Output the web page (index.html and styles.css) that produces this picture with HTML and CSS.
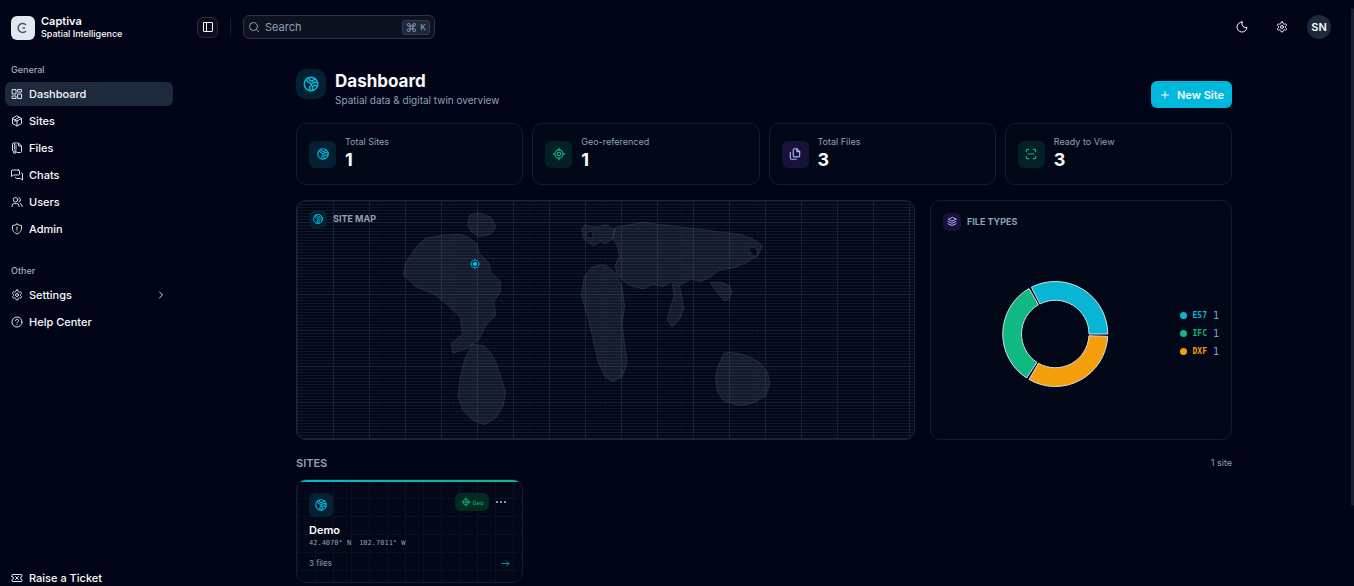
FILE: index.html
```html
<!DOCTYPE html>
<html lang="en">
<head>
<meta charset="utf-8">
<meta name="viewport" content="width=device-width, initial-scale=1">
<title>Captiva – Dashboard</title>
<link rel="stylesheet" href="styles.css">
</head>
<body>
<svg class="sprite" aria-hidden="true">
  <symbol id="i-world" viewBox="0 0 24 24"><circle cx="12" cy="12" r="9"/><path d="M5.600 5.600 8 9.500l3.500 1.500 1 3-2.500 2 .5 4.500M8.500 3.700 10.500 7l3 1.500 4-4M20.700 14.500 17 13.500l-3 2v5M21 10l-4.500-.5-3 2"/></symbol>
  <symbol id="i-target" viewBox="0 0 24 24"><circle cx="12" cy="12" r="7"/><circle cx="12" cy="12" r="3"/><path d="M12 2v3M12 19v3M2 12h3M19 12h3"/></symbol>
  <symbol id="i-files" viewBox="0 0 24 24"><path d="M15 3v4a1 1 0 0 0 1 1h4"/><path d="M18 17h-7a2 2 0 0 1-2-2V5a2 2 0 0 1 2-2h4l5 5v7a2 2 0 0 1-2 2z"/><path d="M14 21H6a2 2 0 0 1-2-2V9"/></symbol>
  <symbol id="i-scan" viewBox="0 0 24 24"><path d="M4 8V6a2 2 0 0 1 2-2h2M4 16v2a2 2 0 0 0 2 2h2M16 4h2a2 2 0 0 1 2 2v2M16 20h2a2 2 0 0 0 2-2v-2M7 12h10"/></symbol>
  <symbol id="i-stack" viewBox="0 0 24 24"><path d="M12 3 4 6.500l8 3.500 8-3.500zM4 11l8 3.500 8-3.500M4 15.500 12 19l8-3.500"/></symbol>
  <symbol id="i-gear" viewBox="0 0 24 24"><path d="M12.220 2h-.44a2 2 0 0 0-2 2v.18a2 2 0 0 1-1 1.730l-.43.25a2 2 0 0 1-2 0l-.15-.08a2 2 0 0 0-2.730.73l-.22.38a2 2 0 0 0 .73 2.730l.15.1a2 2 0 0 1 1 1.720v.51a2 2 0 0 1-1 1.740l-.15.09a2 2 0 0 0-.73 2.730l.22.38a2 2 0 0 0 2.730.73l.15-.08a2 2 0 0 1 2 0l.43.25a2 2 0 0 1 1 1.730V20a2 2 0 0 0 2 2h.44a2 2 0 0 0 2-2v-.18a2 2 0 0 1 1-1.730l.43-.25a2 2 0 0 1 2 0l.15.08a2 2 0 0 0 2.730-.73l.22-.39a2 2 0 0 0-.73-2.730l-.15-.08a2 2 0 0 1-1-1.740v-.5a2 2 0 0 1 1-1.740l.15-.09a2 2 0 0 0 .73-2.730l-.22-.38a2 2 0 0 0-2.730-.73l-.15.08a2 2 0 0 1-2 0l-.43-.25a2 2 0 0 1-1-1.730V4a2 2 0 0 0-2-2z"/><circle cx="12" cy="12" r="3"/></symbol>
  <symbol id="i-dash" viewBox="0 0 24 24"><path d="M3 3h7v9H3zM14 3h7v5h-7zM14 12h7v9h-7zM3 16h7v5H3z"/></symbol>
  <symbol id="i-box" viewBox="0 0 24 24"><path d="m12 2 9 5v10l-9 5-9-5V7zM12 12l9-5M12 12v10M12 12 3 7M16.500 4.500 8 9.500V13"/></symbol>
  <symbol id="i-book" viewBox="0 0 24 24"><path d="M15 3v4a1 1 0 0 0 1 1h4M12 2h3l6 6v11a2 2 0 0 1-2 2h-6"/><path d="M10 2H5a2 2 0 0 0-2 2v13M7 4v2M7 8v2M7 12v2M10 6v2M10 10v2M10 14v2M6 18h4v4H6z"/></symbol>
  <symbol id="i-chat" viewBox="0 0 24 24"><path d="M15 2H3a2 2 0 0 0-2 2v11l4-3h10a2 2 0 0 0 2-2V4a2 2 0 0 0-2-2zM21 8a2 2 0 0 1 2 2v12l-4-3h-8a2 2 0 0 1-2-2"/></symbol>
  <symbol id="i-users" viewBox="0 0 24 24"><circle cx="9" cy="7.500" r="4.500"/><path d="M2 21v-1a5 5 0 0 1 5-5h4a5 5 0 0 1 5 5v1M16 3.300a4.500 4.500 0 0 1 0 8.400M22 21v-1a5 5 0 0 0-3.500-4.800"/></symbol>
  <symbol id="i-shield" viewBox="0 0 24 24"><path d="M12 2a14 14 0 0 0 9 3c1 7-1 14-9 17C4 19 2 12 3 5a14 14 0 0 0 9-3M12 8v5M12 16v.1"/></symbol>
  <symbol id="i-help" viewBox="0 0 24 24"><circle cx="12" cy="12" r="10"/><path d="M9 9.500a3 3 0 1 1 4.200 2.700c-.8.400-1.200.8-1.200 1.500M12 17v.1"/></symbol>
  <symbol id="i-ticket" viewBox="0 0 24 24"><path d="M2 9V6a1 1 0 0 1 1-1h18a1 1 0 0 1 1 1v3a3 3 0 0 0 0 6v3a1 1 0 0 1-1 1H3a1 1 0 0 1-1-1v-3a3 3 0 0 0 0-6zM9 9l6 6M15 9l-6 6"/></symbol>
  <symbol id="i-chevron" viewBox="0 0 24 24"><path d="m9 6 6 6-6 6"/></symbol>
  <symbol id="i-panel" viewBox="0 0 24 24"><rect x="3" y="3" width="18" height="18" rx="1"/><path d="M9 3v18"/></symbol>
  <symbol id="i-search" viewBox="0 0 24 24"><circle cx="11" cy="11" r="8"/><path d="m17 17 4 4"/></symbol>
  <symbol id="i-cmd" viewBox="0 0 24 24"><path d="M15 6v12a3 3 0 1 0 3-3H6a3 3 0 1 0 3 3V6a3 3 0 1 0-3 3h12a3 3 0 1 0-3-3"/></symbol>
  <symbol id="i-moon" viewBox="0 0 24 24"><path d="M12 2h.5a8 8 0 0 0 9.500 11A10 10 0 1 1 12 2z"/></symbol>
  <symbol id="i-plus" viewBox="0 0 24 24"><path d="M12 5v14M5 12h14"/></symbol>
  <symbol id="i-arrow" viewBox="0 0 24 24"><path d="M3 12h18M14 5l7 7-7 7"/></symbol>
</svg>

<div class="app">
  <aside class="sidebar">
    <div class="brand">
      <svg class="brand-logo" viewBox="0 0 24 24" aria-hidden="true"><path d="M15 9a4.500 4.500 0 1 0 0 6"/><path d="M11.500 12h2.500"/></svg>
      <div><div class="brand-name">Captiva</div><div class="brand-sub">Spatial Intelligence</div></div>
    </div>
    <nav class="nav" aria-label="General">
      <div class="nav-label">General</div>
      <a class="nav-link active" href="#dashboard"><svg class="icon"><use href="#i-dash"/></svg>Dashboard</a>
      <a class="nav-link" href="#all-sites"><svg class="icon"><use href="#i-box"/></svg>Sites</a>
      <a class="nav-link" href="#files"><svg class="icon"><use href="#i-book"/></svg>Files</a>
      <a class="nav-link" href="#chats"><svg class="icon"><use href="#i-chat"/></svg>Chats</a>
      <a class="nav-link" href="#users"><svg class="icon"><use href="#i-users"/></svg>Users</a>
      <a class="nav-link" href="#admin"><svg class="icon"><use href="#i-shield"/></svg>Admin</a>
    </nav>
    <nav class="nav" aria-label="Other">
      <div class="nav-label">Other</div>
      <button class="nav-link" type="button"><svg class="icon"><use href="#i-gear"/></svg>Settings<svg class="icon chevron"><use href="#i-chevron"/></svg></button>
      <a class="nav-link" href="#help"><svg class="icon"><use href="#i-help"/></svg>Help Center</a>
    </nav>
    <a class="nav-link ticket" href="#ticket"><svg class="icon"><use href="#i-ticket"/></svg>Raise a Ticket</a>
  </aside>

  <div class="page">
    <header class="topbar">
      <button class="toggle" type="button" aria-label="Toggle sidebar"><svg class="icon"><use href="#i-panel"/></svg></button>
      <span class="divider"></span>
      <label class="search">
        <svg class="icon"><use href="#i-search"/></svg>
        <input type="search" placeholder="Search" aria-label="Search">
        <kbd><svg class="icon"><use href="#i-cmd"/></svg>K</kbd>
      </label>
      <div class="actions">
        <button class="plain" type="button" aria-label="Dark mode"><svg class="icon"><use href="#i-moon"/></svg></button>
        <button class="plain" type="button" aria-label="Preferences"><svg class="icon"><use href="#i-gear"/></svg></button>
        <button class="avatar" type="button">SN</button>
      </div>
    </header>

    <main class="content" id="dashboard">
      <div class="heading">
        <span class="tile tile-lg cyan"><svg class="icon"><use href="#i-world"/></svg></span>
        <div class="heading-text"><h1>Dashboard</h1><p>Spatial data &amp; digital twin overview</p></div>
        <button class="new-site" type="button"><svg class="icon"><use href="#i-plus"/></svg>New Site</button>
      </div>

      <section class="stats" aria-label="Statistics">
        <div class="card stat"><span class="tile tile-md cyan"><svg class="icon"><use href="#i-world"/></svg></span><div><div class="stat-label">Total Sites</div><div class="stat-value">1</div></div></div>
        <div class="card stat"><span class="tile tile-md green"><svg class="icon"><use href="#i-target"/></svg></span><div><div class="stat-label">Geo-referenced</div><div class="stat-value">1</div></div></div>
        <div class="card stat"><span class="tile tile-md violet"><svg class="icon"><use href="#i-files"/></svg></span><div><div class="stat-label">Total Files</div><div class="stat-value">3</div></div></div>
        <div class="card stat"><span class="tile tile-md green"><svg class="icon"><use href="#i-scan"/></svg></span><div><div class="stat-label">Ready to View</div><div class="stat-value">3</div></div></div>
      </section>

      <div class="panels">
        <section class="card map">
          <svg class="world" viewBox="21 18 1851 714" role="img" aria-label="World map with one site">
            <g class="land">
              <path d="M405 130 460 120 510 118 535 126 560 146 568 175 597 204 603 232 632 260V290L611 320 618 360 588 390 568 433 532 460 490 475 483 446 518 418 511 367 475 332 432 297 376 275 340 240 347 204 375 160z"/>
              <path d="M540 60 568 53 603 67 618 96 603 118 568 125 545 111 532 89z"/>
              <path d="M547 447 583 453 604 476 618 503 647 590 640 632 618 668 583 689 547 675 518 646 504 604 511 546 525 490z"/>
              <g transform="translate(720 0)">
                <path fill-rule="evenodd" d="M155 103 165 89 195 97 227 89 255 103 248 131 227 146 212 139 190 153 170 139 161 131zM169 118 176 111H186L190 120 186 129H176z"/>
                <path fill-rule="evenodd" d="M255 97 340 82 430 93 630 118 668 131 698 153 683 182 648 204 611 218 568 225 540 247 512 260 483 253 454 268 426 261 398 275 369 268 340 282 310 275 283 261 262 239 255 211 269 182 262 153 248 131zM654 160 675 157 683 170 681 184 668 182z"/>
                <path d="M183 218 205 210H227L255 232 276 275 284 332 276 390 291 503 276 546 248 560 226 546 205 503 175 370 154 300 162 247z"/>
                <path d="M426 267 448 270 462 340 448 375 426 396 412 375 420 340 433 303z"/>
                <path d="M540 261 576 262 598 272 605 290 598 311 583 318 566 300z"/>
                <path d="M583 474 597 472 626 475 662 487 690 503 713 532 720 568 706 603 668 625 626 632 583 618 562 590 556 546 568 504z"/>
              </g>
            </g>
            <g class="pin"><circle class="pin-halo" cx="555" cy="207" r="12"/><path d="M555 191v6M555 217v6M539 207h6M565 207h6"/><circle class="pin-dot" cx="555" cy="207" r="6"/></g>
          </svg>
          <div class="panel-head"><span class="tile tile-sm cyan"><svg class="icon"><use href="#i-world"/></svg></span><h2>SITE MAP</h2></div>
        </section>

        <section class="card types">
          <div class="panel-head"><span class="tile tile-sm violet"><svg class="icon"><use href="#i-stack"/></svg></span><h2>FILE TYPES</h2></div>
          <div class="types-body">
            <svg class="donut" viewBox="-54 -54 108 108" role="img" aria-label="File types: one E57, one IFC, one DXF">
              <path fill="#06b6d4" d="M52.500 0A52.500 52.500 0 0 0-23.830-46.780L-15.320-30.070A33.750 33.750 0 0 1 33.750 0z"/>
              <path fill="#10b981" d="M-26.250-45.470A52.500 52.500 0 0 0-28.590 44.030L-18.380 28.300A33.750 33.750 0 0 1-16.870-29.230z"/>
              <path fill="#f59e0b" d="M-26.250 45.470A52.500 52.500 0 0 0 52.430 2.400L33.700 1.770A33.750 33.750 0 0 1-16.870 29.230z"/>
            </svg>
            <ul class="legend">
              <li class="e57"><b>E57</b><span>1</span></li>
              <li class="ifc"><b>IFC</b><span>1</span></li>
              <li class="dxf"><b>DXF</b><span>1</span></li>
            </ul>
          </div>
        </section>
      </div>

      <section id="all-sites">
        <div class="sites-head"><h2>SITES</h2><span>1 site</span></div>
        <div class="sites">
          <article class="card site">
            <div class="site-top">
              <span class="tile tile-site cyan"><svg class="icon"><use href="#i-world"/></svg></span>
              <span class="badge"><svg class="icon"><use href="#i-target"/></svg>Geo</span>
              <button class="more" type="button" aria-label="More options"><i></i><i></i><i></i></button>
            </div>
            <h3>Demo</h3>
            <p class="coords"><span>42.4070° N</span><span>102.7011° W</span></p>
            <div class="site-foot"><span>3 files</span><a href="#demo" aria-label="Open Demo"><svg class="icon"><use href="#i-arrow"/></svg></a></div>
          </article>
        </div>
      </section>
    </main>
    <div class="scroll-thumb"></div>
  </div>
</div>
</body>
</html>
```

FILE: styles.css
```css
* { box-sizing: border-box; }
body {
  margin: 0;
  background: #020418;
  color: #f8fafc;
  font: 500 11px/14px Inter, "Liberation Sans", sans-serif;
}
h1, h2, h3, p, ul { margin: 0; padding: 0; }
button { font: inherit; color: inherit; background: none; border: 0; padding: 0; }
a { color: inherit; text-decoration: none; }
.sprite { position: absolute; width: 0; height: 0; }
.icon {
  width: 12px; height: 12px; flex: none;
  fill: none; stroke: currentColor; stroke-width: 2;
  stroke-linecap: round; stroke-linejoin: round;
}

.app {
  display: grid; grid-template-columns: 178px minmax(0, 1fr); grid-template-rows: minmax(0, 1fr);
  height: 100vh; overflow: hidden;
}

/* Sidebar */
.sidebar { display: flex; flex-direction: column; padding: 15px 5px 0; min-height: 0; }
.brand { display: flex; align-items: center; gap: 6px; padding: 0 6px; height: 25px; margin-bottom: 18px; }
.brand-logo {
  width: 24px; height: 24px; border-radius: 6px; background: #e2e8f0;
  fill: none; stroke: #475569; stroke-width: 1.500;
}
.brand-name { font-weight: 600; line-height: 13px; }
.brand-sub { font-size: 9px; line-height: 12px; }
.nav { display: flex; flex-direction: column; gap: 3px; margin-bottom: 18px; }
.nav-label { height: 21px; padding: 0 6px; font-size: 9px; line-height: 24px; color: #a3acba; }
.nav-link {
  display: flex; align-items: center; gap: 6px;
  height: 24px; width: 168px; padding: 0 6px; border-radius: 6px; text-align: left;
}
.nav-link .icon { color: #dbe2ea; }
.nav-link.active { background: #1d293d; }
.nav-link .chevron { margin-left: auto; }
.ticket { margin-top: auto; height: 16px; }

/* Top bar */
.page { position: relative; display: flex; flex-direction: column; min-width: 0; padding-right: 4px; }
.topbar { display: flex; align-items: center; height: 54px; padding: 0 19px; flex: none; }
.toggle {
  display: grid; place-items: center; width: 21px; height: 21px;
  border: 1px solid #2a2c3b; border-radius: 6px; background: #0b0e1f;
}
.divider { width: 1px; height: 18px; margin: 0 12px; background: #1b1e2e; }
.search {
  display: flex; align-items: center; gap: 5px; width: 192px; height: 24px; padding: 0 4px;
  border: 1px solid #2f3240; border-radius: 6px; background: #0e1120; color: #90a1b9;
}
.search input {
  flex: 1; min-width: 0; padding: 0; border: 0; outline: 0; background: none;
  color: inherit; font: 400 11px/14px Inter, sans-serif;
}
.search input::placeholder { color: #90a1b9; opacity: 1; }
kbd {
  display: flex; align-items: center; justify-content: center; gap: 3px; width: 28px; height: 15px;
  border: 1px solid #303c50; border-radius: 3px; background: #1d293d;
  font: 500 8px/12px Inter, sans-serif;
}
kbd .icon { width: 11px; height: 11px; stroke-width: 2; }
.actions { display: flex; align-items: center; gap: 16px; margin-left: auto; }
.plain { display: grid; place-items: center; width: 24px; height: 24px; }
.avatar { width: 24px; height: 24px; margin-left: -3px; border-radius: 50%; background: #1d293d; font-weight: 600; }

/* Shared pieces */
.content { width: 100%; max-width: 960px; margin: 0 auto; padding: 15px 12px; }
.card { border: 1px solid #171c2b; border-radius: 10px; background: #020817; }
.tile { display: grid; place-items: center; flex: none; border-radius: 6px; }
.tile-lg { width: 30px; height: 30px; border-radius: 10px; }
.tile-lg .icon { width: 18px; height: 18px; }
.tile-md { width: 27px; height: 27px; }
.tile-md .icon { width: 14px; height: 14px; }
.tile-sm { width: 18px; height: 18px; }
.tile-site { width: 24px; height: 24px; }
.tile-site .icon { width: 14px; height: 14px; }
.cyan { background: #042033; color: #06b6d4; }
.green { background: #022026; color: #10b981; }
.violet { background: #18113a; color: #a5b4fc; }
h2 { font-size: 9px; line-height: 12px; font-weight: 700; color: #90a1b9; }

/* Heading */
.heading { display: flex; align-items: flex-start; gap: 9px; margin-bottom: 15px; }
.heading-text { flex: 1; }
h1 { font-size: 17px; line-height: 24px; font-weight: 700; }
.heading p { color: #90a1b9; font-weight: 400; font-size: 10px; line-height: 15px; }
.new-site {
  display: flex; align-items: center; justify-content: center; gap: 6px;
  width: 81px; height: 27px; margin-top: 12px; border-radius: 6px; background: #00b8db; font-weight: 600;
}

/* Statistics */
.stats { display: grid; grid-template-columns: repeat(4, 1fr); gap: 9px; margin-bottom: 15px; }
.stat { display: flex; align-items: center; gap: 9px; height: 62px; padding: 0 12px; }
.stat-label { font-size: 9px; line-height: 12px; font-weight: 400; color: #90a1b9; }
.stat-value { font-size: 18px; line-height: 24px; font-weight: 700; }

/* Map and file types */
.panels { display: grid; grid-template-columns: repeat(3, 1fr); gap: 15px; margin-bottom: 15px; }
.panel-head { display: flex; align-items: center; gap: 6px; }
.map {
  position: relative; grid-column: span 2; height: 240px; padding: 9px 12px; overflow: hidden;
  background-color: #020817;
  background-image:
    linear-gradient(90deg, #1a2130 1px, transparent 1px),
    linear-gradient(#1d2433 1px, transparent 1px),
    linear-gradient(90deg, #0b1120 1px, transparent 1px),
    linear-gradient(#111827 1px, transparent 1px);
  background-size: 36px 36px, 36px 36px, 76px 76px, 3px 3px;
  background-position: 0 0, 0 21px, 4px 0, 0 0;
  border-color: #1d2433;
}
.world { position: absolute; inset: 0; width: 100%; height: 100%; }
.land path { fill: #94a3b8; fill-opacity: .12; stroke: #94a3b8; stroke-opacity: .16; stroke-width: 3; }
.pin { fill: none; stroke: #0891b2; stroke-width: 3; }
.pin .pin-halo { fill: #04334a; }
.pin .pin-dot { fill: #06c5e5; stroke: none; }
.map .panel-head { position: relative; }
.types { display: flex; flex-direction: column; padding: 12px; }
.types-body { display: flex; align-items: center; gap: 12px; flex: 1; padding-top: 9px; }
.donut { flex: 1; height: 108px; stroke: #d5dde7; stroke-width: 1; }
.legend { display: grid; gap: 6px; list-style: none; font: 400 10px/12px "DejaVu Sans Mono", monospace; }
.legend li { display: flex; align-items: center; gap: 6px; }
.legend li::before { content: ""; width: 7px; height: 7px; border-radius: 50%; background: currentColor; }
.legend b { font-size: 8px; }
.legend span { color: #90a1b9; }
.e57 { color: #06b6d4; }
.ifc { color: #10b981; }
.dxf { color: #f59e0b; }

/* Sites */
.sites-head { display: flex; align-items: center; justify-content: space-between; height: 15px; margin-bottom: 9px; }
.sites-head h2 { font-size: 11px; font-weight: 600; }
.sites-head span { font-size: 9px; font-weight: 400; color: #90a1b9; }
.sites { display: grid; grid-template-columns: repeat(4, 1fr); gap: 9px; }
.site {
  height: 104px; padding: 13px 12px 0; overflow: hidden;
  background-image:
    linear-gradient(90deg, #06b6d4, #10b981),
    linear-gradient(90deg, #0a1120 1px, transparent 1px),
    linear-gradient(#0a1120 1px, transparent 1px);
  background-size: 100% 2px, 18px 18px, 18px 18px;
  background-repeat: no-repeat, repeat, repeat;
}
.site-top { display: flex; align-items: flex-start; height: 24px; margin-bottom: 6px; }
.badge {
  display: flex; align-items: center; justify-content: center; gap: 2px; width: 34px; height: 18px;
  margin-left: auto; border-radius: 6px; background: #022c22; color: #10b981;
  font: 500 6px/9px "DejaVu Sans Mono", monospace;
}
.badge .icon { width: 10px; height: 10px; }
.more { display: flex; align-items: center; justify-content: center; gap: 2px; width: 18px; height: 18px; margin-left: 3px; }
.more i { width: 2px; height: 2px; border-radius: 50%; background: #b4c0d0; }
h3 { font-size: 11px; line-height: 14px; font-weight: 600; }
.coords { display: flex; gap: 8px; color: #90a1b9; font: 400 7px/12px "DejaVu Sans Mono", monospace; }
.site-foot { display: flex; align-items: center; justify-content: space-between; height: 12px; margin-top: 8px; }
.site-foot span { font-size: 8px; font-weight: 400; color: #90a1b9; }
.site-foot a { display: flex; color: #06b6d4; }
.site-foot .icon { width: 9px; height: 9px; }

.scroll-thumb { position: absolute; right: 0; top: 8px; width: 3px; height: 85%; border-radius: 3px; background: #1b1e2e; }
```
